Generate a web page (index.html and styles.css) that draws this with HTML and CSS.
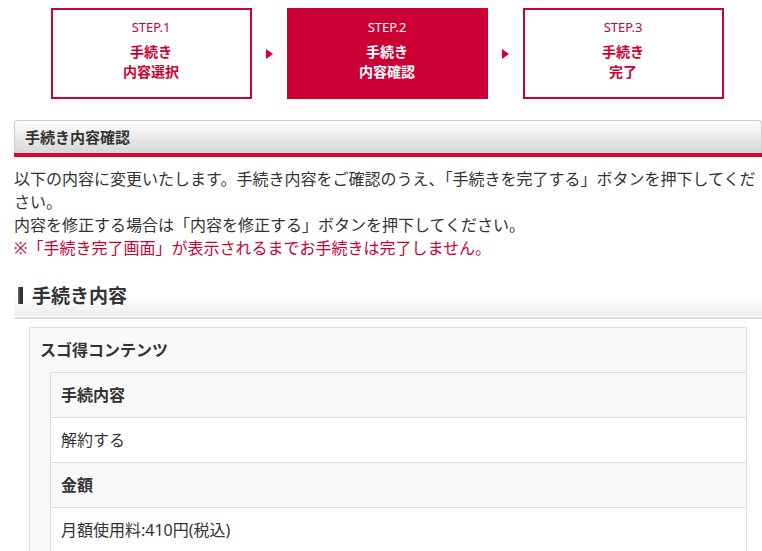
FILE: index.html
```html
<!DOCTYPE html>
<html lang="ja">
<head>
  <meta charset="UTF-8">
  <meta name="viewport" content="width=device-width, initial-scale=1.0">
  <link rel="stylesheet" href="styles.css">
  <title>手続き内容確認</title>
</head>
<body>

  <div class="wrap">
    <ol class="steps">
      <li class="step">
        <span class="step-no">STEP.1</span>
        <span class="step-name">手続き<br>内容選択</span>
      </li>
      <li class="arrow"></li>
      <li class="step current">
        <span class="step-no">STEP.2</span>
        <span class="step-name">手続き<br>内容確認</span>
      </li>
      <li class="arrow"></li>
      <li class="step">
        <span class="step-no">STEP.3</span>
        <span class="step-name">手続き<br>完了</span>
      </li>
    </ol>

    <h1 class="page-title">手続き内容確認</h1>

    <div class="lead">
      <p>以下の内容に変更いたします。手続き内容をご確認のうえ、「手続きを完了する」ボタンを押下してください。</p>
      <p>内容を修正する場合は「内容を修正する」ボタンを押下してください。</p>
      <p class="notice">※「手続き完了画面」が表示されるまでお手続きは完了しません。</p>
    </div>

    <h2 class="sec-title"><span class="bar"></span>手続き内容</h2>

    <dl class="service">
      <dt>スゴ得コンテンツ</dt>
      <dd>
        <dl class="detail">
          <dt>手続内容</dt>
          <dd>解約する</dd>
          <dt>金額</dt>
          <dd>月額使用料:410円(税込)</dd>
        </dl>
      </dd>
    </dl>
  </div>

</body>
</html>
```

FILE: styles.css
```css
body {
  margin: 0;
  background: #fff;
  color: #333;
  font-family: "Noto Sans", "Noto Sans CJK JP", sans-serif;
  font-size: 16px;
}

.wrap {
  padding: 8px 0 0 14px;
}

/* ステップ表示 */
.steps {
  list-style: none;
  margin: 0 0 0 -2px;
  padding: 0;
  display: flex;
  justify-content: center;
  align-items: center;
}

.step {
  box-sizing: border-box;
  width: 201px;
  height: 91px;
  border: 2px solid #cc0033;
  color: #cc0033;
  text-align: center;
  display: flex;
  flex-direction: column;
  align-items: center;
  padding-top: 8px;
}

.step.current {
  background: #cc0033;
  color: #fff;
}

.step-no {
  font-size: 13px;
  line-height: 18px;
}

.step-name {
  margin-top: 6px;
  font-size: 14px;
  font-weight: bold;
  line-height: 20px;
}

.arrow {
  width: 35px;
  display: flex;
  justify-content: center;
}

.arrow::before {
  content: "";
  border-left: 7px solid #cc0033;
  border-top: 5px solid transparent;
  border-bottom: 5px solid transparent;
}

/* 見出し */
.page-title {
  margin: 21px 0 0;
  height: 33px;
  box-sizing: border-box;
  padding: 0 10px;
  border: 1px solid #ccc;
  border-bottom: none;
  border-radius: 4px 4px 0 0;
  background: linear-gradient(#fff, #d6d6d6);
  box-shadow: 0 4px 0 #cc0a32;
  font-size: 15px;
  font-weight: bold;
  line-height: 33px;
  color: #333;
}

.lead {
  margin-top: 15px;
  font-size: 16px;
  line-height: 23px;
}

.lead p {
  margin: 0;
}

.lead .notice {
  color: #cc0033;
}

.sec-title {
  margin: 13px 0 0;
  height: 44px;
  padding-left: 4px;
  display: flex;
  align-items: center;
  gap: 9px;
  border-bottom: 2px solid #ddd;
  box-shadow: inset 0 -1px 0 #fff;
  background: linear-gradient(#fff 50%, #ececec);
  font-size: 19px;
  font-weight: bold;
}

.bar {
  width: 5px;
  height: 17px;
  background: linear-gradient(90deg, #777, #333 40%);
}

/* 手続き内容 */
.service {
  margin: 8px 15px 0;
  background: #f9f9f9;
  border: 1px solid #ddd;
}

.service > dt {
  height: 44px;
  line-height: 44px;
  padding-left: 10px;
  font-weight: bold;
}

.service > dd {
  margin: 0 0 0 20px;
}

.detail {
  margin: 0;
  border-left: 1px solid #ddd;
  border-top: 1px solid #ddd;
}

.detail dt,
.detail dd {
  margin: 0;
  height: 44px;
  line-height: 44px;
  padding-left: 10px;
  border-bottom: 1px solid #ddd;
}

.detail dt {
  background: #f8f8f8;
  font-weight: bold;
}

.detail dd {
  background: #fff;
}
```
